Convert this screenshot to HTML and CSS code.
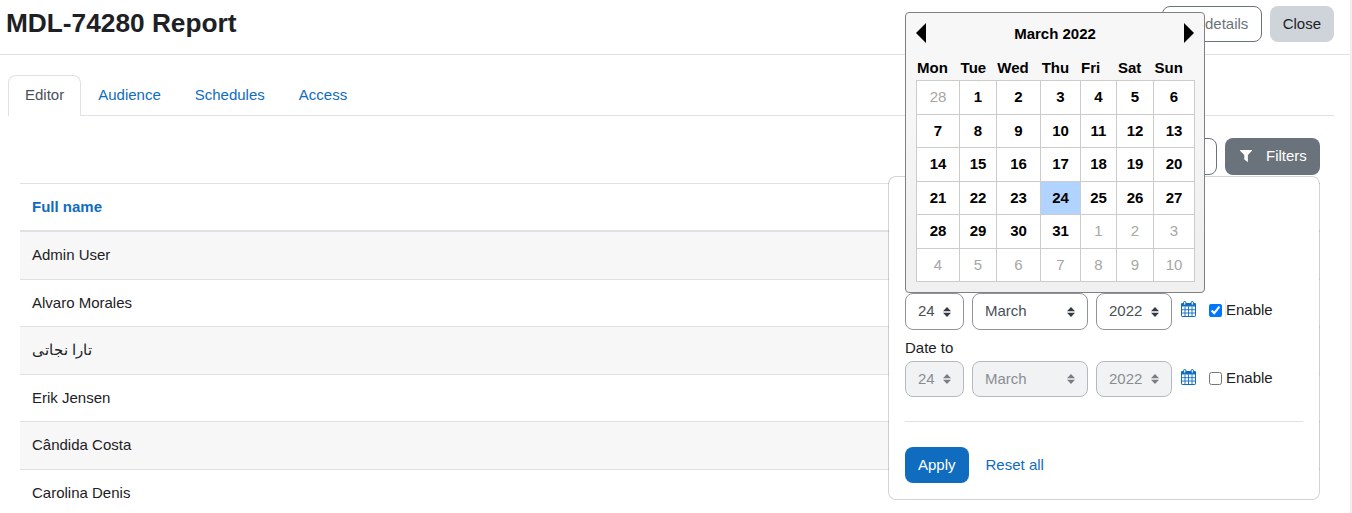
FILE: index.html
```html
<!DOCTYPE html>
<html lang="en">
<head>
<meta charset="utf-8">
<title>MDL-74280 Report</title>
<link rel="stylesheet" href="styles.css">
</head>
<body>
<svg class="defs" width="0" height="0">
  <symbol id="calendar" viewBox="0 0 15 16">
    <rect x=".5" y="2.500" width="14" height="13" rx=".7" fill="#fff" stroke="currentColor"/>
    <path fill="currentColor" d="M0 2.500h15V5.500H0z"/>
    <path fill="none" stroke="currentColor" stroke-width=".9" d="M4 5.500v10M7.500 5.500v10M11 5.500v10M1 8.700h13M1 12h13"/>
    <rect x="2.500" y=".5" width="2.400" height="3.700" rx="1.200" fill="#dbe9f5" stroke="currentColor"/>
    <rect x="10.100" y=".5" width="2.400" height="3.700" rx="1.200" fill="#dbe9f5" stroke="currentColor"/>
  </symbol>
  <symbol id="sort" viewBox="0 0 4 5"><path fill="currentColor" d="M2 0L0 2.100h4zm0 5L0 2.900h4z"/></symbol>
</svg>
<div class="page">
  <header class="header">
    <h1 class="title">MDL-74280 Report</h1>
    <button class="btn outline">Edit details</button>
    <button class="btn light">Close</button>
  </header>
  <nav class="tabs">
    <a class="tab active">Editor</a>
    <a class="tab">Audience</a>
    <a class="tab">Schedules</a>
    <a class="tab">Access</a>
  </nav>
  <main class="report">
    <div class="toolbar">
      <button class="btn outline blank" aria-label="View"></button>
      <button class="btn dark"><svg class="funnel" viewBox="0 0 12 12"><path fill="currentColor" d="M.3 0h11.400c.4 0 .5.500.2.800L7.900 5v6.500c0 .4-.4.600-.7.300L4.700 9.800a.7.7 0 0 1-.4-.6V5L.1.800C-.2.500-.1 0 .3 0z"/></svg>Filters</button>
    </div>
    <div class="table">
      <div class="row head">Full name</div>
      <div class="row first odd">Admin User</div>
      <div class="row">Alvaro Morales</div>
      <div class="row odd"><span dir="rtl">تارا نجاتی</span></div>
      <div class="row">Erik Jensen</div>
      <div class="row odd">Cândida Costa</div>
      <div class="row">Carolina Denis</div>
    </div>
  </main>
</div>

<section class="filters">
  <div class="date">
    <span class="select day">24<svg><use href="#sort"/></svg></span>
    <span class="select month">March<svg><use href="#sort"/></svg></span>
    <span class="select year">2022<svg><use href="#sort"/></svg></span>
    <svg class="cal-icon"><use href="#calendar"/></svg>
    <label class="enable focus"><input type="checkbox" checked><span>Enable</span></label>
  </div>
  <div class="label">Date to</div>
  <div class="date">
    <span class="select day disabled">24<svg><use href="#sort"/></svg></span>
    <span class="select month disabled">March<svg><use href="#sort"/></svg></span>
    <span class="select year disabled">2022<svg><use href="#sort"/></svg></span>
    <svg class="cal-icon"><use href="#calendar"/></svg>
    <label class="enable"><input type="checkbox"><span>Enable</span></label>
  </div>
  <div class="actions">
    <button class="btn primary">Apply</button>
    <a class="reset">Reset all</a>
  </div>
</section>

<section class="calendar">
  <div class="cal-head">
    <svg class="arrow" viewBox="0 0 10 20"><path d="M10 0v20L0 10z"/></svg>
    <span>March 2022</span>
    <svg class="arrow" viewBox="0 0 10 20"><path d="M0 0v20l10-10z"/></svg>
  </div>
  <div class="weekdays"><span>Mon</span><span>Tue</span><span>Wed</span><span>Thu</span><span>Fri</span><span>Sat</span><span>Sun</span></div>
  <div class="days">
    <span class="out">28</span><span>1</span><span>2</span><span>3</span><span>4</span><span>5</span><span>6</span>
    <span>7</span><span>8</span><span>9</span><span>10</span><span>11</span><span>12</span><span>13</span>
    <span>14</span><span>15</span><span>16</span><span>17</span><span>18</span><span>19</span><span>20</span>
    <span>21</span><span>22</span><span>23</span><span class="selected">24</span><span>25</span><span>26</span><span>27</span>
    <span>28</span><span>29</span><span>30</span><span>31</span><span class="out">1</span><span class="out">2</span><span class="out">3</span>
    <span class="out">4</span><span class="out">5</span><span class="out">6</span><span class="out">7</span><span class="out">8</span><span class="out">9</span><span class="out">10</span>
  </div>
</section>
</body>
</html>
```
FILE: styles.css
```css
* { box-sizing: border-box; }
body {
  margin: 0;
  height: 513px;
  overflow: hidden;
  position: relative;
  font: 15px/22.5px "Liberation Sans", Arial, sans-serif;
  color: #1d2125;
  background: #fff;
}
.defs { position: absolute; }
.page { height: 513px; overflow: hidden; border-right: 2px solid #efefef; }
.header {
  display: flex;
  align-items: flex-start;
  gap: 8px;
  height: 55px;
  padding: 6px 16px 0 6px;
  border-bottom: 1px solid #dee2e6;
}
.title { flex: 1; margin: 1px 0 0; font-size: 26.25px; line-height: 32px; }
.btn {
  height: 36px;
  padding: 0 12px;
  border: 1px solid transparent;
  border-radius: 8px;
  font: inherit;
  white-space: nowrap;
}
.outline { width: 100px; background: #fff; border-color: #6a737b; color: #6a737b; }
.light { background: #ced4da; color: #1d2125; }
.dark {
  display: flex;
  align-items: center;
  width: 95px;
  height: 37px;
  padding-left: 14px;
  background: #6a737b;
  color: #fff;
}
.primary { background: #0f6cbf; color: #fff; }
.tabs {
  display: flex;
  margin: 20px 16px 0 8px;
  height: 41px;
  border-bottom: 1px solid #dee2e6;
}
.tab {
  height: 40px;
  padding: 8px 16px;
  border: 1px solid transparent;
  border-bottom: 0;
  color: #0f6cbf;
}
.tab.active {
  height: 41px;
  background: #fff;
  border-color: #dee2e6;
  border-radius: 8px 8px 0 0;
  color: #495057;
}
.report { padding: 22px 30px 0 20px; }
.toolbar { display: flex; justify-content: flex-end; gap: 8px; }
.blank { height: 37px; }
.funnel { width: 12px; height: 12px; margin: 0 14px 2px 0; }
.table { margin-top: 8px; }
.row { height: 47.5px; padding: 12px; border-top: 1px solid #dee2e6; }
.row.head { height: 49px; border-bottom: 2px solid #dee2e6; color: #0f6cbf; font-weight: bold; }
.row.first { height: 46.9px; border-top: 0; }
.odd { background: #f7f7f7; }

.filters {
  position: absolute;
  left: 888px;
  top: 176px;
  width: 432px;
  height: 324px;
  padding: 116px 16px 0;
  border: 1px solid rgba(0, 0, 0, .17);
  border-radius: 8px;
  background: #fff;
  background-clip: padding-box;
}
.date { display: flex; gap: 8px; }
.select {
  display: flex;
  align-items: center;
  justify-content: space-between;
  height: 37px;
  padding: 0 12px;
  border: 1px solid #8f959e;
  border-radius: 8px;
  color: #495057;
  background: #fff;
}
.select svg { width: 8px; height: 10px; color: #343a40; }
.day { width: 59px; }
.month { width: 116px; }
.year { width: 76px; }
.disabled { height: 36px; background: #e9ecef; opacity: .65; }
.cal-icon { width: 15px; height: 16px; margin: 8px 0 0 1px; color: #0f6cbf; }
.enable { display: flex; align-items: flex-start; height: 22px; margin: 6px 0 0 5px; }
.enable input { width: 13px; height: 13px; margin: 5px 3px 0 0; accent-color: #0075ff; }
.enable span { padding-left: 1px; }
.focus span { padding-left: 0; border-left: 1px solid #e3eaf1; height: 19px; }
.label { height: 31px; padding-top: 7px; }
.actions {
  display: flex;
  align-items: center;
  gap: 17px;
  margin-top: 24px;
  padding-top: 25px;
  border-top: 1px solid #dee2e6;
}
.reset { color: #0f6cbf; }

.calendar {
  position: absolute;
  left: 905px;
  top: 12px;
  width: 300px;
  height: 281px;
  padding: 10px;
  border: 1px solid #808080;
  border-radius: 4px;
  background: linear-gradient(#f7f7f7, #f6f6f6 40%, #f0f0f0 80%);
  color: #000;
  font-weight: bold;
}
.cal-head { display: flex; justify-content: space-between; height: 34px; }
.arrow { width: 10px; height: 20px; }
.weekdays, .days { display: grid; grid-template-columns: 43px 37px 44px 40px 36px 37px 41px; }
.weekdays {
  grid-template-columns: 43.6px 36.7px 44.400px 39.300px 37px 36.500px 40.500px;
  height: 23px;
  line-height: 22px;
  padding-left: 1px;
}
.days {
  width: 279px;
  grid-template-rows: 34px 33px 34px 33px 34px 33px;
  border: 1px solid #ccc;
  border-width: 1px 0 0 1px;
  background: #fff;
  text-align: center;
  line-height: 32px;
}
.days span { border: 1px solid #ccc; border-width: 0 1px 1px 0; }
.days .out { color: #a6a6a6; font-weight: normal; }
.days .selected { background: #b0d3ff; }
```
